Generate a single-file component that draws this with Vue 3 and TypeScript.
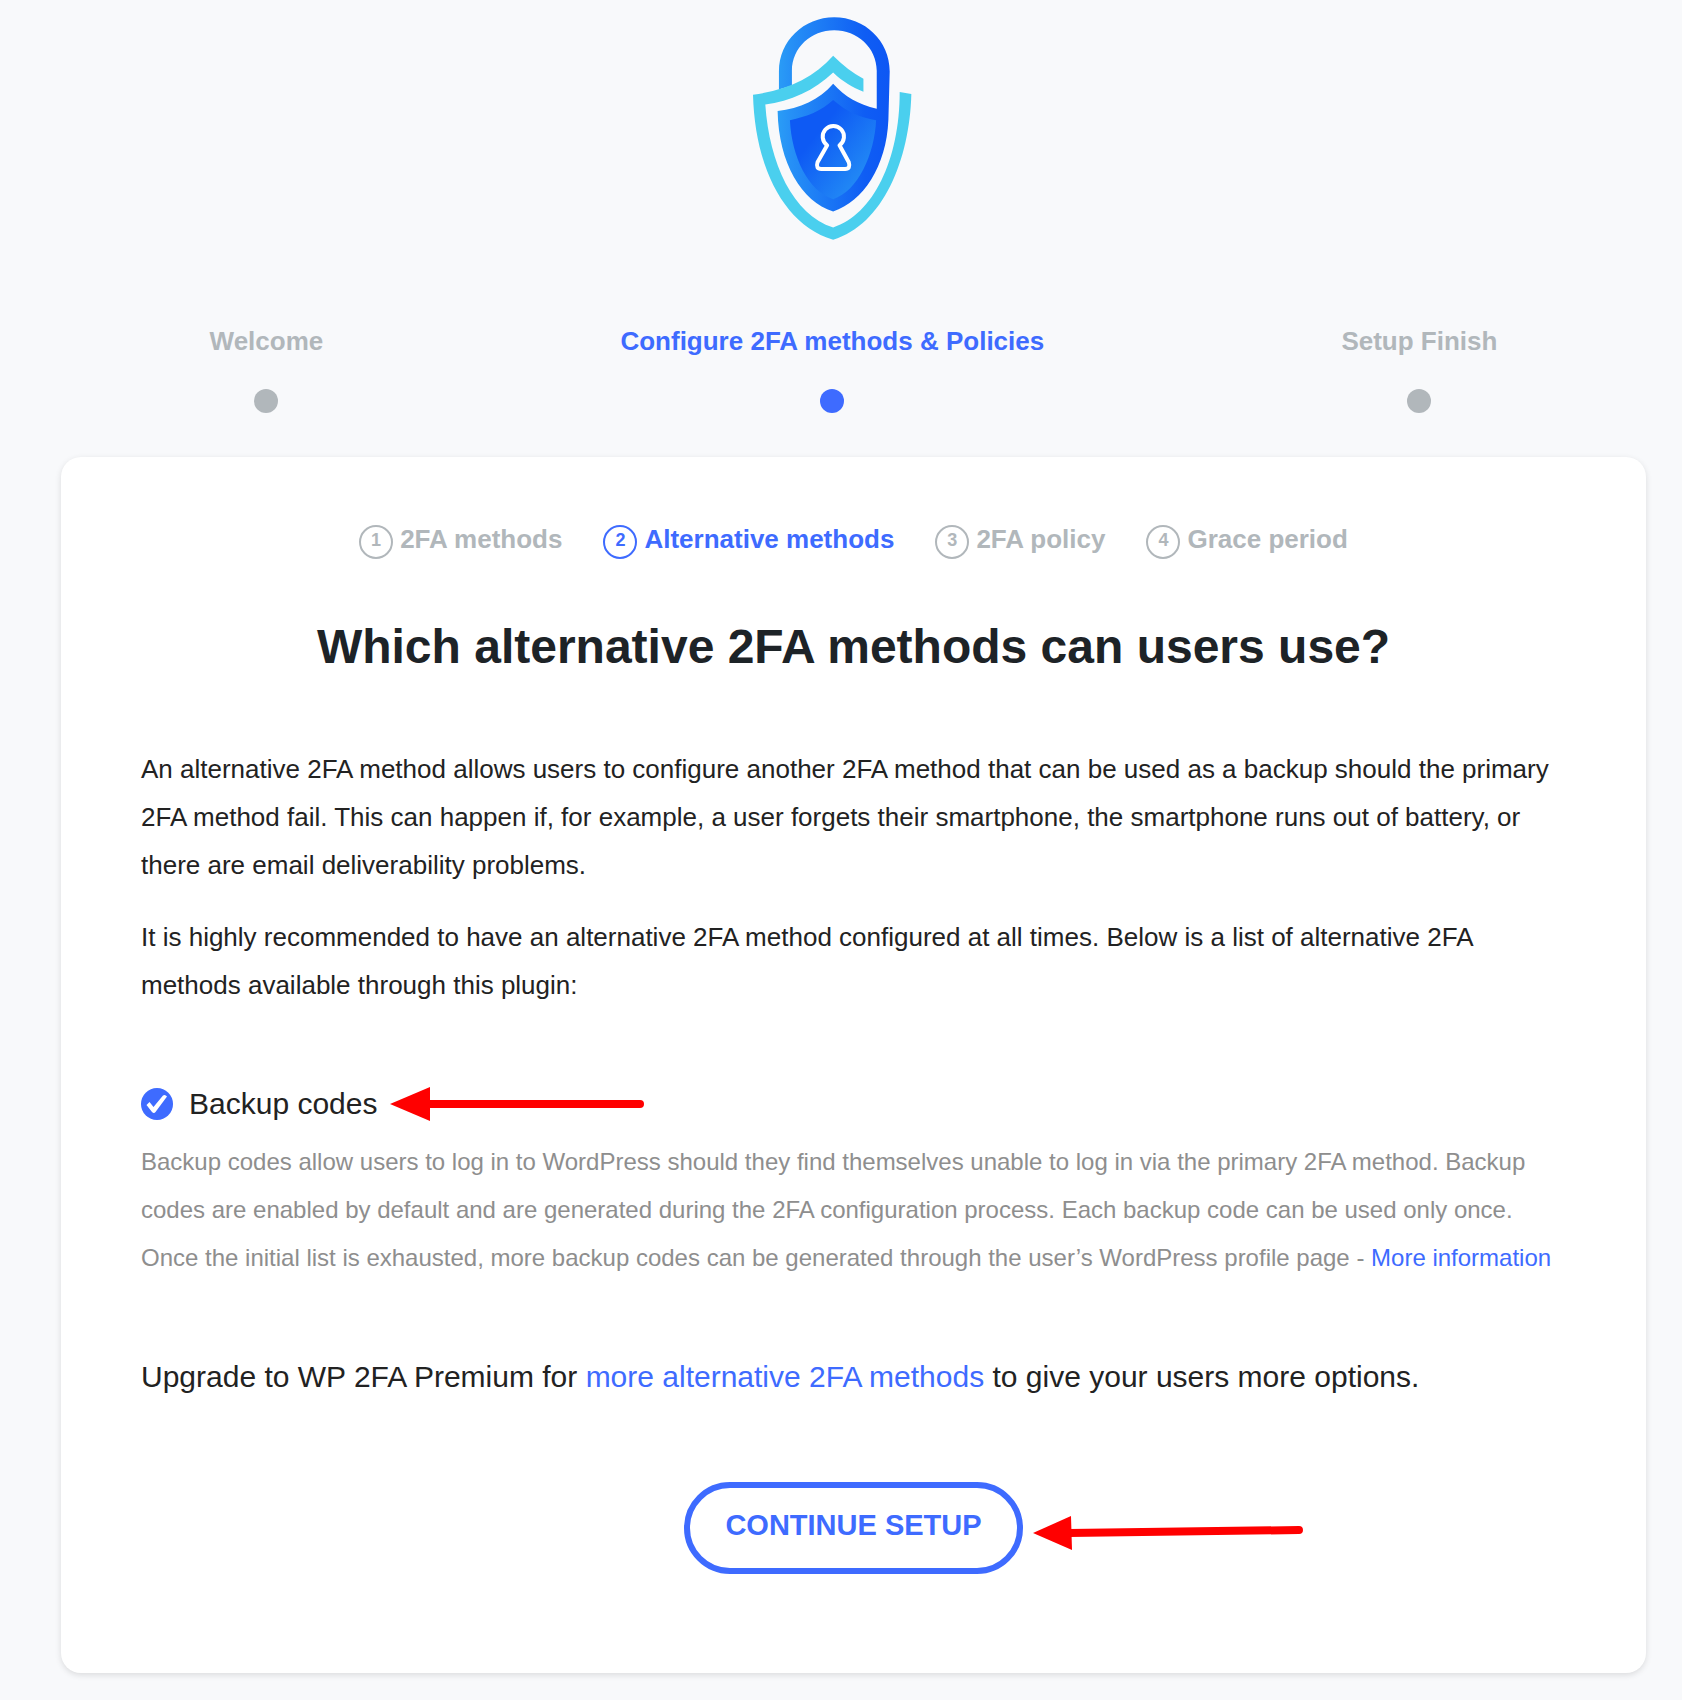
<script setup lang="ts">
import { ref } from 'vue'

interface Stage {
  label: string
  active: boolean
}

const stages: Stage[] = [
  { label: 'Welcome', active: false },
  { label: 'Configure 2FA methods & Policies', active: true },
  { label: 'Setup Finish', active: false },
]

const substeps: Stage[] = [
  { label: '2FA methods', active: false },
  { label: 'Alternative methods', active: true },
  { label: '2FA policy', active: false },
  { label: 'Grace period', active: false },
]

const backupCodes = ref(true)
</script>

<template>
  <main class="wizard">
    <header class="brand">
      <svg class="logo" viewBox="60 45 490 681" role="img" aria-label="WP 2FA">
        <defs>
          <linearGradient id="lock" x1="0" y1="0" x2="1" y2="0">
            <stop offset="0" stop-color="#2a9df6" />
            <stop offset="0.12" stop-color="#2690f6" />
            <stop offset="0.78" stop-color="#0f5df4" />
            <stop offset="1" stop-color="#0d57f4" />
          </linearGradient>
          <linearGradient id="shield" x1="0.25" y1="0.3" x2="0.8" y2="0.8">
            <stop offset="0.1" stop-color="#0e5af4" />
            <stop offset="1" stop-color="#2188f5" />
          </linearGradient>
        </defs>
        <path
          fill="url(#lock)"
          d="M147 268V214C147 122 222 51 313 51C405 51 480 122 480 214L476 360C470 500 400 605 310 635C215 605 146 490 143 333C210 325 268 300 310 251C345 290 385 313 441 326V212C441 142 382 90 313 90C244 90 186 142 186 212V256Z"
        />
        <path
          fill="url(#shield)"
          d="M180 361C230 350 275 333 310 300C350 335 390 352 439 361C435 460 385 575 310 598C235 575 185 470 180 361Z"
        />
        <path
          fill="#4acfee"
          d="M69 284C170 270 250 235 310 167C340 197 370 220 401 236V275C368 261 340 246 310 217C255 270 180 305 106 313C118 490 190 645 310 683C430 645 510 480 510 276L545 282C540 480 460 675 310 720C160 675 75 500 69 284Z"
        />
        <path
          fill="none"
          stroke="#fff"
          stroke-width="12"
          stroke-linejoin="round"
          d="M292 436A32 32 0 1 1 329 436L357 487Q363 507 346 507H274Q257 507 263 487Z"
        />
      </svg>
    </header>

    <ol class="stages">
      <li v-for="stage in stages" :key="stage.label" class="stage" :class="{ active: stage.active }">
        <span>{{ stage.label }}</span>
        <span class="dot"></span>
      </li>
    </ol>

    <section class="card">
      <ol class="substeps">
        <li
          v-for="(step, index) in substeps"
          :key="step.label"
          class="substep"
          :class="{ active: step.active }"
        >
          <span class="number">{{ index + 1 }}</span>
          <span>{{ step.label }}</span>
        </li>
      </ol>

      <h1>Which alternative 2FA methods can users use?</h1>

      <div class="intro">
        <p>
          An alternative 2FA method allows users to configure another 2FA method that can be used as
          a backup should the primary 2FA method fail. This can happen if, for example, a user
          forgets their smartphone, the smartphone runs out of battery, or there are email
          deliverability problems.
        </p>
        <p>
          It is highly recommended to have an alternative 2FA method configured at all times. Below
          is a list of alternative 2FA methods available through this plugin:
        </p>
      </div>

      <div class="option">
        <input id="backup-codes" v-model="backupCodes" type="checkbox" aria-describedby="backup-help" />
        <label for="backup-codes">Backup codes</label>
        <svg class="arrow arrow-option" viewBox="0 0 256 34" aria-hidden="true">
          <path d="M0 17L40 0V34Z" fill="#f00" />
          <path d="M38 17H250" stroke="#f00" stroke-width="8" stroke-linecap="round" />
        </svg>
      </div>
      <p id="backup-help" class="help">
        Backup codes allow users to log in to WordPress should they find themselves unable to log in
        via the primary 2FA method. Backup codes are enabled by default and are generated during the
        2FA configuration process. Each backup code can be used only once. Once the initial list is
        exhausted, more backup codes can be generated through the user’s WordPress profile page -
        <a href="#more-information">More information</a>
      </p>

      <p class="upgrade">
        Upgrade to WP 2FA Premium for <a href="#premium">more alternative 2FA methods</a> to give
        your users more options.
      </p>

      <div class="actions">
        <button type="button">CONTINUE SETUP</button>
        <svg class="arrow arrow-action" viewBox="0 0 272 36" aria-hidden="true">
          <path d="M0 18L38 1L39 35Z" fill="#f00" />
          <path d="M36 18L266 15" stroke="#f00" stroke-width="8" stroke-linecap="round" />
        </svg>
      </div>
    </section>
  </main>
</template>

<style>
html,
body {
  margin: 0;
  background: #f8f9fb;
}
</style>

<style scoped>
.wizard {
  padding: 15px 36px 27px 61px;
  font-family: 'Liberation Sans', Arial, Helvetica, sans-serif;
  font-size: 26px;
  color: #222;
}

ol {
  margin: 0;
  padding: 0;
  list-style: none;
}

p {
  margin: 0;
}

a {
  color: #3e6bff;
  text-decoration: none;
}

.brand {
  display: flex;
  justify-content: center;
  padding-right: 44px;
}

.logo {
  width: 163px;
  height: 227px;
}

.stages {
  display: flex;
  justify-content: space-around;
  margin: 85px 0 44px;
}

.stage {
  display: flex;
  flex-direction: column;
  align-items: center;
  gap: 33px;
  line-height: 29px;
  font-weight: 700;
  color: #b1b7bb;
}

.dot {
  width: 24px;
  height: 24px;
  border-radius: 50%;
  background: currentColor;
}

.active {
  color: #3e6bff;
}

.card {
  padding: 68px 80px 99px;
  border-radius: 20px;
  background: #fff;
  box-shadow: 0 2px 6px rgba(0, 0, 0, 0.12);
}

.substeps {
  display: flex;
  justify-content: center;
  gap: 41px;
}

.substep {
  display: flex;
  gap: 7px;
  line-height: 28px;
  font-weight: 700;
  color: #b1b7bb;
}

.substep.active {
  color: #3e6bff;
}

.number {
  box-sizing: border-box;
  width: 34px;
  height: 34px;
  border: 2px solid currentColor;
  border-radius: 50%;
  font-size: 18px;
  line-height: 26px;
  text-align: center;
}

h1 {
  margin: 60px 0 70px;
  font-size: 48px;
  line-height: 56px;
  text-align: center;
  color: #1d2327;
}

.intro {
  display: grid;
  gap: 24px;
  line-height: 48px;
}

.option {
  position: relative;
  display: flex;
  align-items: center;
  gap: 16px;
  margin-top: 78px;
  font-size: 30px;
  line-height: 34px;
}

.option input {
  appearance: none;
  width: 32px;
  height: 32px;
  margin: 0;
  border-radius: 50%;
  background: #fff;
  border: 2px solid #b1b7bb;
}

.option input:checked {
  border: 0;
  background: #3e6bff
    url("data:image/svg+xml,%3Csvg xmlns='http://www.w3.org/2000/svg' viewBox='0 0 32 32'%3E%3Cpath d='M5.500 17L8.500 14L12.500 19L22 7.500Q24 6 26 8.500L14.500 24Q13 26 11 24Z' fill='%23fff'/%3E%3C/svg%3E");
}

.arrow {
  position: absolute;
  fill: none;
}

.arrow-option {
  left: 249px;
  top: 0;
  width: 256px;
  height: 34px;
}

.help {
  margin-top: 17px;
  font-size: 24px;
  line-height: 48px;
  color: #8e8e8e;
}

.upgrade {
  margin-top: 71px;
  font-size: 30px;
  line-height: 48px;
}

.actions {
  position: relative;
  display: flex;
  justify-content: center;
  margin-top: 81px;
}

button {
  padding: 21px 35px 26px;
  border: 6px solid #3e6bff;
  border-radius: 46px;
  background: #fff;
  font: 700 29px/33px 'Liberation Sans', Arial, Helvetica, sans-serif;
  color: #3e6bff;
  cursor: pointer;
}

.arrow-action {
  left: calc(50% + 179px);
  top: 33px;
  width: 272px;
  height: 36px;
}
</style>
